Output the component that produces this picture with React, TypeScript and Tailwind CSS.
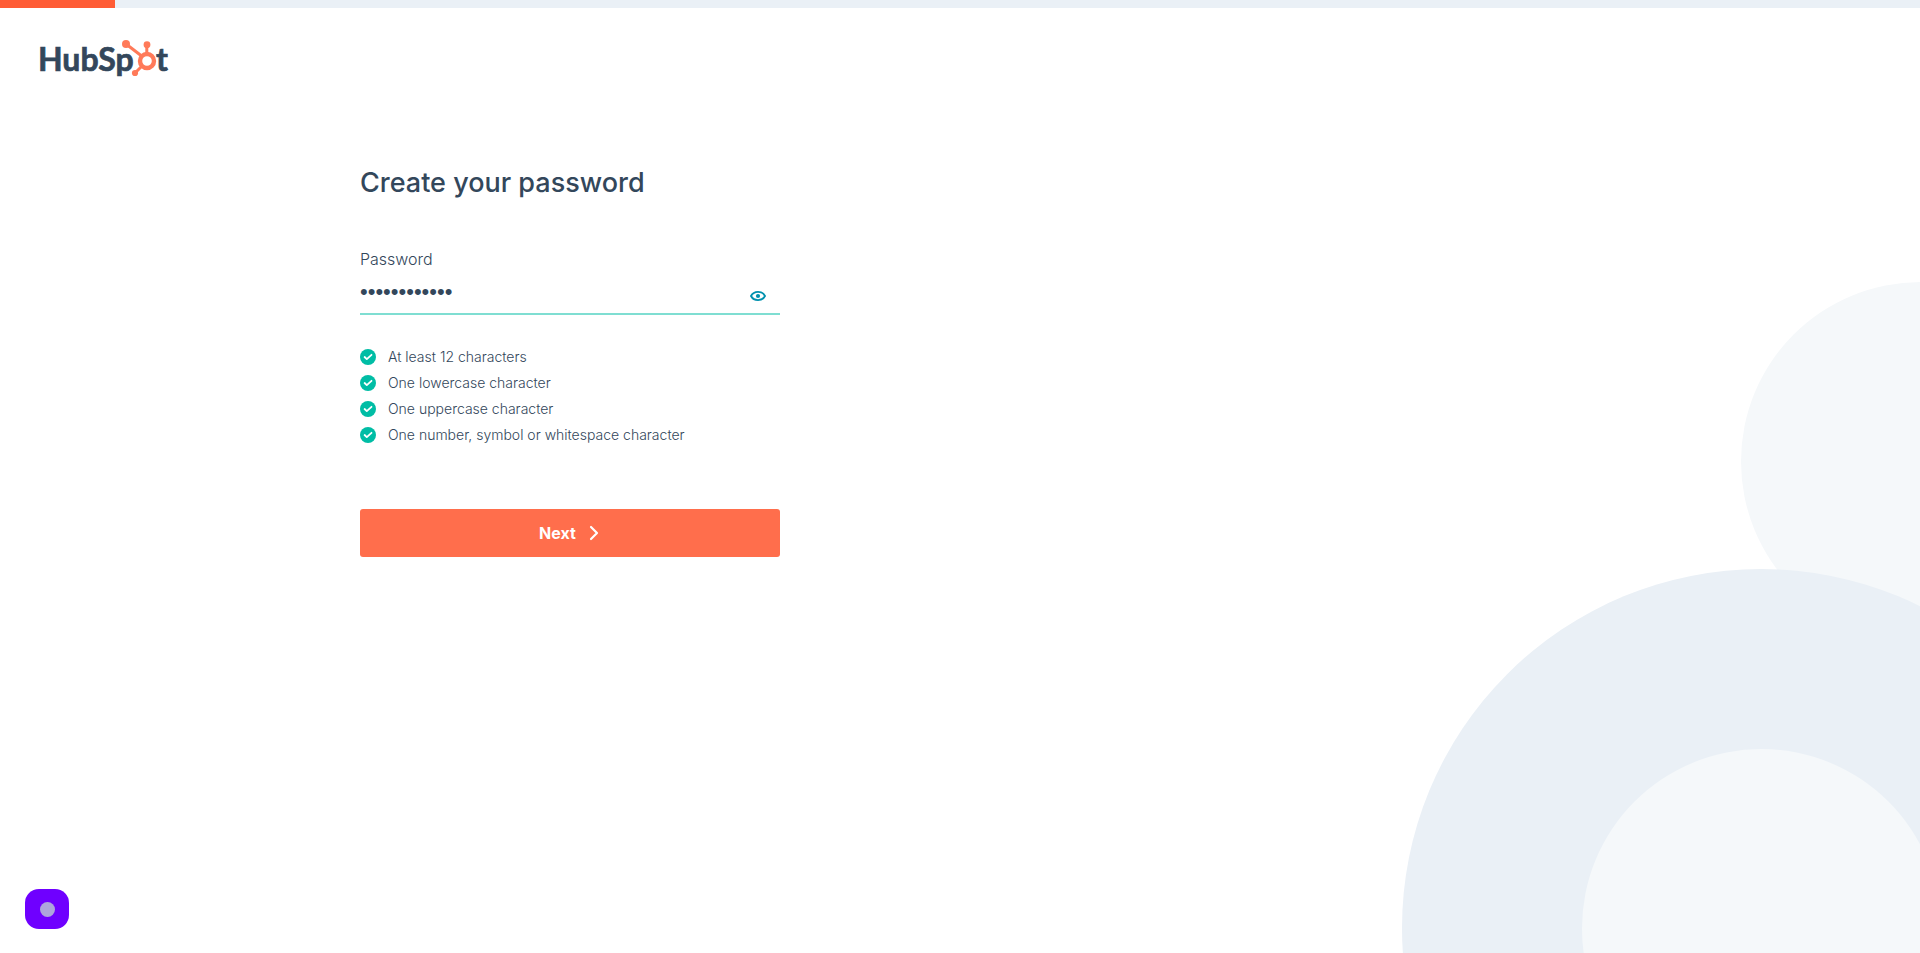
import { useState } from "react";

const requirements = [
  "At least 12 characters",
  "One lowercase character",
  "One uppercase character",
  "One number, symbol or whitespace character",
];

function Logo() {
  return (
    <svg className="block h-12 w-[136px]" viewBox="-4 -4 136 48" role="img" aria-label="HubSpot">
      <g className="fill-[#33475b] stroke-[#33475b] font-['Lato',sans-serif] text-[32px] font-bold" strokeWidth="0.700">
        <text x="-2" y="31">HubSp</text>
        <text x="116" y="31">t</text>
      </g>
      <g stroke="#ff7a59" fill="none">
        <circle cx="107" cy="21" r="7" strokeWidth="4.400" />
        <path d="M86 4 101 15.500M106.800 5v9M101.500 26.500 95 33" strokeWidth="3" />
      </g>
      <g fill="#ff7a59">
        <circle cx="86" cy="4" r="4" />
        <circle cx="107" cy="4.700" r="3.400" />
        <circle cx="95" cy="33" r="3.100" />
      </g>
    </svg>
  );
}

function CheckIcon() {
  return (
    <svg className="size-4 shrink-0" viewBox="0 0 16 16" aria-hidden="true">
      <circle cx="8" cy="8" r="8" fill="#00bda5" />
      <path d="m4.600 8 2.200 2.100 4.700-4.300" fill="none" stroke="#fff" strokeWidth="1.800" strokeLinecap="round" strokeLinejoin="round" />
    </svg>
  );
}

function EyeIcon() {
  return (
    <svg className="h-3 w-4" viewBox="0 0 16 12" aria-hidden="true">
      <path d="M1 6C2.500 3.200 5 1.900 8 1.900S13.500 3.200 15 6c-1.500 2.800-4 4.100-7 4.100S2.500 8.800 1 6Z" fill="none" stroke="#0091ae" strokeWidth="1.900" strokeLinejoin="round" />
      <circle cx="8" cy="6" r="2.100" fill="#0091ae" />
    </svg>
  );
}

function BackgroundCircles() {
  return (
    <div className="pointer-events-none absolute inset-0 -z-10 overflow-hidden" aria-hidden="true">
      <div className="absolute -right-[180px] bottom-[312px] size-[359px] rounded-full bg-[#f5f8fa]" />
      <div className="absolute -right-[200px] -bottom-[334px] flex size-[718px] items-center justify-center rounded-full bg-[#eaf0f6]">
        <div className="size-[359px] rounded-full bg-[#f5f8fa]" />
      </div>
    </div>
  );
}

export default function App() {
  const [visible, setVisible] = useState(false);
  const [password, setPassword] = useState("Password1234");

  return (
    <div className="relative isolate flex min-h-screen flex-col bg-white font-['Inter',sans-serif] text-[#33475b]">
      <BackgroundCircles />

      <div className="h-2 bg-[#eaf0f6]" role="progressbar" aria-label="Sign-up progress" aria-valuenow={6} aria-valuemin={0} aria-valuemax={100}>
        <div className="h-full w-[6%] bg-[#ff5c35]" />
      </div>

      <header className="px-9 pt-7">
        <a href="#" className="inline-block align-top">
          <Logo />
        </a>
      </header>

      <main className="flex-1 px-10 pt-[79px] lg:px-[360px]">
        <form className="w-full max-w-[420px]" onSubmit={(e) => e.preventDefault()}>
          <h1 className="text-[27px] leading-10 font-medium">Create your password</h1>

          <label htmlFor="password" className="mt-11 block text-base leading-6 font-light">
            Password
          </label>
          <div className="flex h-11 items-center border-b-2 border-[#7fded2] pr-3">
            <input
              id="password"
              type={visible ? "text" : "password"}
              value={password}
              onChange={(e) => setPassword(e.target.value)}
              className="h-full min-w-0 flex-1 bg-transparent font-['Liberation_Sans',sans-serif] text-[22px] outline-none"
            />
            <button type="button" aria-label="Show password" onClick={() => setVisible(!visible)} className="mt-2 p-0.5">
              <EyeIcon />
            </button>
          </div>

          <ul className="mt-[30px] flex flex-col gap-0.5">
            {requirements.map((text) => (
              <li key={text} className="flex h-6 items-center gap-3 text-sm leading-6 font-light">
                <CheckIcon />
                {text}
              </li>
            ))}
          </ul>

          <button type="submit" className="mt-[62px] flex h-12 w-full items-center justify-center gap-[13px] rounded-[3px] bg-[#ff6e4c] pr-0.5 text-base font-bold text-white">
            Next
            <svg className="h-4 w-2.5" viewBox="0 0 10 16" fill="none" stroke="currentColor" strokeWidth="2.200" strokeLinecap="round" strokeLinejoin="round" aria-hidden="true">
              <path d="m2 2 6 6-6 6" />
            </svg>
          </button>
        </form>
      </main>

      <footer className="px-[25px] pt-10 pb-6">
        <button type="button" aria-label="Open assistant" className="flex h-10 w-11 items-center justify-center rounded-[14px] bg-[#6f00ff]">
          <span className="size-[15px] rounded-full bg-[#aea5dc]" />
        </button>
      </footer>
    </div>
  );
}
